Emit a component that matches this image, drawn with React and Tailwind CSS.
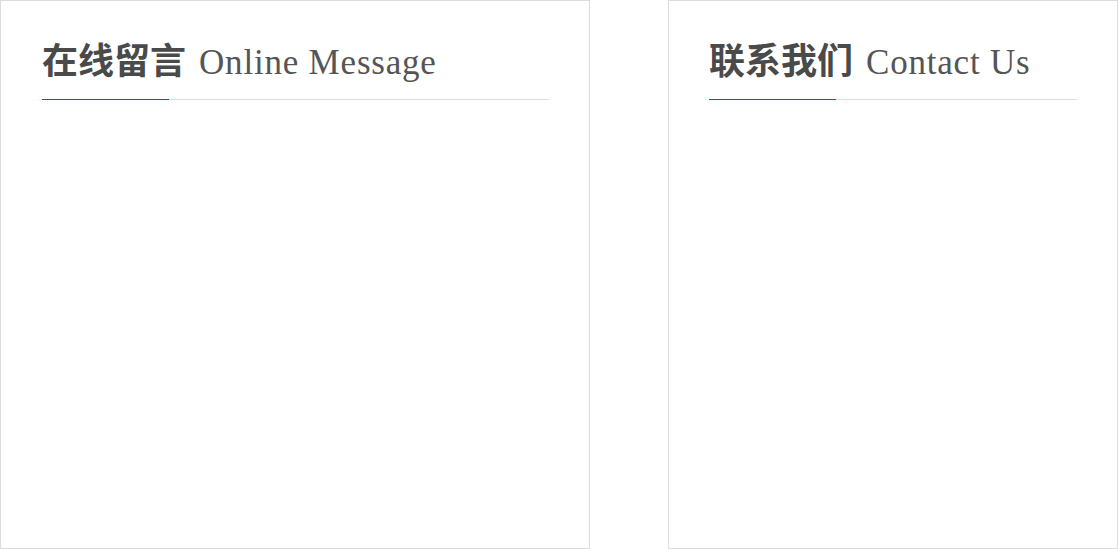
import React from "react";

function Panel({ zh, en, className }) {
  return (
    <div className={"h-[549px] border border-[#dcdcdc] bg-white " + className}>
      <div className="flex items-baseline gap-[13px] h-[70px] pt-[39px]">
        <h2
          className="text-[36px] leading-none font-bold text-[#4a4a4a]"
          style={{ fontFamily: '"Noto Sans CJK SC", sans-serif' }}
        >
          {zh}
        </h2>
        <span
          className="text-[35px] leading-none tracking-[0.8px] text-[#555]"
          style={{ fontFamily: '"Liberation Serif", serif' }}
        >
          {en}
        </span>
      </div>
      <div className="flex mt-[28px]">
        <div className="w-[127px] h-px bg-[#c8161d]" />
        <div className="flex-1 h-px bg-[#dcdcdc]" />
      </div>
    </div>
  );
}

export default function App() {
  return (
    <div className="w-[1118px] h-[549px] flex justify-between bg-white">
      <Panel zh="在线留言" en="Online Message" className="w-[590px] pl-[41px] pr-[40px]" />
      <Panel zh="联系我们" en="Contact Us" className="w-[450px] pl-[40px] pr-[40px]" />
    </div>
  );
}
